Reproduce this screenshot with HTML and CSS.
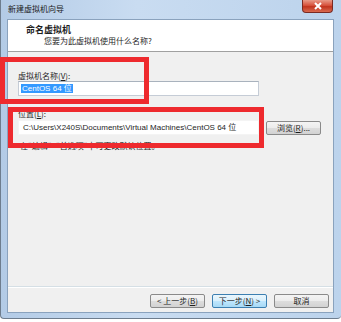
FILE: index.html
```html
<!DOCTYPE html>
<html>
<head>
<meta charset="utf-8">
<link rel="stylesheet" href="styles.css">
</head>
<body>
<div class="window">
  <div class="titlebar">
    <span class="title">新建虚拟机向导</span>
    <span class="close"><svg width="10" height="8" viewBox="0 0 10 8"><path d="M2 1 L8 7 M8 1 L2 7" stroke="#fff" stroke-width="2"/></svg></span>
  </div>
  <div class="client">
    <div class="header">
      <div class="h-title">命名虚拟机</div>
      <div class="h-sub">您要为此虚拟机使用什么名称?</div>
    </div>
    <div class="content">
      <div class="label name-label">虚拟机名称(<u>V</u>):</div>
      <div class="input name-input"><span class="sel">CentOS 64 位</span></div>
      <div class="label loc-label">位置(<u>L</u>):</div>
      <div class="loc-row">
        <div class="input loc-input">C:\Users\X240S\Documents\Virtual Machines\CentOS 64 位</div>
        <div class="btn browse">浏览(<u>R</u>)...</div>
      </div>
      <div class="hint">在"编辑"&gt;"首选项"中可更改默认位置。</div>
    </div>
    <div class="footer">
      <div class="btn">&lt; 上一步(<u>B</u>)</div>
      <div class="btn primary">下一步(<u>N</u>) &gt;</div>
      <div class="btn">取消</div>
    </div>
  </div>
  <div class="mark mark1"></div>
  <div class="mark mark2"></div>
</div>
</body>
</html>
```
FILE: styles.css
```css
html, body {
  margin: 0;
  padding: 0;
  background: #ffffff;
}
body {
  width: 341px;
  height: 322px;
  overflow: hidden;
  font-family: "Noto Sans CJK SC", "Liberation Sans", sans-serif;
  font-size: 8px;
  color: #1e1e1e;
}
.window {
  position: relative;
  box-sizing: border-box;
  width: 341px;
  height: 319px;
  padding: 0 7px 5px 6px;
  display: flex;
  flex-direction: column;
  background: linear-gradient(to right, #b3cbe6 0%, #c9dcf1 40%, #bcd3ec 100%);
  border-left: 1px solid #6e7d8e;
  border-bottom: 1px solid #6e7d8e;
  border-radius: 0 0 4px 4px;
}
.titlebar {
  height: 19px;
  display: flex;
  align-items: flex-start;
  justify-content: space-between;
}
.title {
  margin-top: 4px;
  margin-left: 1px;
  line-height: 10px;
  font-size: 8px;
  color: #1a1a1a;
}
.close {
  width: 29px;
  height: 12px;
  margin-right: 1px;
  border: 1px solid #7a2a22;
  border-top: none;
  border-radius: 0 0 4px 4px;
  background: linear-gradient(to bottom, #e89a88 0%, #d7523c 45%, #c1341e 55%, #d96a4f 100%);
  display: flex;
  align-items: center;
  justify-content: center;
}
.client {
  flex: 1;
  display: flex;
  flex-direction: column;
  background: #f0f0f0;
  border: 1px solid #8aa2bd;
}
.header {
  height: 32px;
  background: #ffffff;
  border-bottom: 1px solid #a0a0a0;
  padding: 4px 0 0 18px;
  box-sizing: border-box;
}
.h-title {
  font-weight: bold;
  font-size: 9px;
  line-height: 11px;
}
.h-sub {
  margin-left: 18px;
  margin-top: 1px;
  line-height: 10px;
}
.content {
  flex: 1;
  padding: 19px 0 0 10px;
  display: flex;
  flex-direction: column;
  align-items: flex-start;
}
.label {
  line-height: 10px;
}
.input {
  box-sizing: border-box;
  height: 15px;
  width: 241px;
  background: #ffffff;
  border: 1px solid #c5ccd6;
  border-top-color: #a9b2bd;
  padding: 1px 2px;
  font-family: "Liberation Sans", "Noto Sans CJK SC", sans-serif;
  font-size: 8px;
  line-height: 11px;
  white-space: nowrap;
  overflow: hidden;
}
.name-input {
  margin-top: 0px;
}
.sel {
  background: #3399ff;
  color: #ffffff;
  padding: 0 1px;
}
.loc-label {
  margin-top: 13px;
}
.loc-row {
  display: flex;
  align-items: center;
  margin-top: 1px;
}
.loc-input {
  height: 15px;
  border-color: #f4f4f4;
  padding-left: 4px;
}
.btn {
  box-sizing: border-box;
  width: 55px;
  height: 14px;
  border: 1px solid #8a8a8a;
  border-radius: 2px;
  background: linear-gradient(to bottom, #f4f4f4 0%, #ececec 48%, #dddddd 52%, #d2d2d2 100%);
  font-size: 8px;
  line-height: 12px;
  text-align: center;
  color: #1e1e1e;
  white-space: nowrap;
}
.browse {
  margin-left: 7px;
}
.hint {
  margin-top: 6px;
  margin-left: 2px;
  line-height: 10px;
}
.footer {
  height: 26px;
  border-top: 1px solid #d5dfe5;
  box-shadow: inset 0 1px 0 #ffffff;
  display: flex;
  justify-content: flex-end;
  align-items: flex-start;
  gap: 7px;
  padding: 7px 4px 0 0;
  box-sizing: border-box;
}
.btn.primary {
  border-color: #3c7fb1;
  background: linear-gradient(to bottom, #eaf6fd 0%, #d9f0fc 48%, #bee6fd 52%, #a7d9f5 100%);
}
.mark {
  position: absolute;
  box-sizing: border-box;
  border: 5px solid #ee2a2e;
}
.mark1 {
  left: -1px;
  top: 57px;
  width: 149px;
  height: 47px;
}
.mark2 {
  left: 7px;
  top: 107px;
  width: 256px;
  height: 41px;
}
```
